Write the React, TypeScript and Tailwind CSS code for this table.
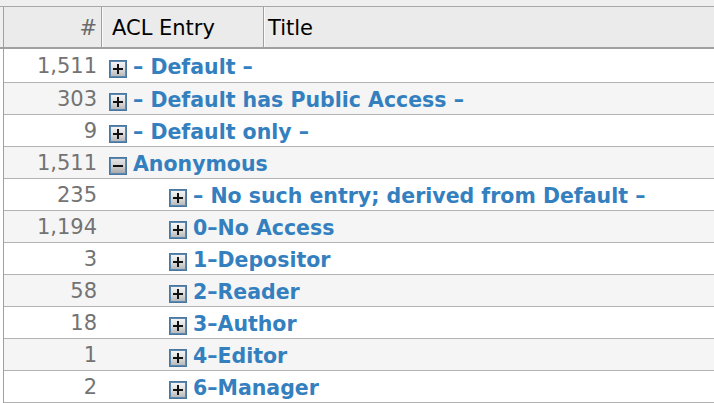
import React from "react";

type Row = { n: string; label: string; level: 0 | 1; open?: boolean };

const rows: Row[] = [
  { n: "1,511", label: "– Default –", level: 0 },
  { n: "303", label: "– Default has Public Access –", level: 0 },
  { n: "9", label: "– Default only –", level: 0 },
  { n: "1,511", label: "Anonymous", level: 0, open: true },
  { n: "235", label: "– No such entry; derived from Default –", level: 1 },
  { n: "1,194", label: "0–No Access", level: 1 },
  { n: "3", label: "1–Depositor", level: 1 },
  { n: "58", label: "2–Reader", level: 1 },
  { n: "18", label: "3–Author", level: 1 },
  { n: "1", label: "4–Editor", level: 1 },
  { n: "2", label: "6–Manager", level: 1 },
];

function Toggle({ open }: { open?: boolean }) {
  return (
    <svg width="18" height="18" viewBox="0 0 18 18" className="shrink-0 mt-[3px]">
      <defs>
        <linearGradient id={open ? "gm" : "gp"} x1="0" y1="0" x2="0" y2="1">
          <stop offset="0" stopColor={open ? "#e4e4e4" : "#f4f4f4"} />
          <stop offset="0.5" stopColor={open ? "#cfcfcf" : "#dedede"} />
          <stop offset="1" stopColor={open ? "#a9a9a9" : "#b9b9b9"} />
        </linearGradient>
      </defs>
      <rect x="0.5" y="0.5" width="17" height="17" fill="#5d88b0" stroke="#4a76a0" />
      <rect x="2" y="2" width="14" height="14" fill={`url(#${open ? "gm" : "gp"})`} />
      <rect x="4" y="8" width="10" height="2" fill="#111" />
      {!open && <rect x="8" y="4" width="2" height="10" fill="#111" />}
    </svg>
  );
}

export default function App() {
  return (
    <div className="w-[714px] h-[403px] overflow-hidden bg-white font-['DejaVu_Sans',sans-serif]">
      <div className="h-[7px] bg-[#efefef] border-b border-[#a8a8a8]" />
      <div className="flex h-[42px] bg-[#efefef] pl-[3px] border-b-2 border-[#a0a0a0]">
        <div className="flex flex-1 border-l border-[#a0a0a0] bg-[#ebebeb]">
          <div className="w-[98px] flex items-center justify-end pr-[4px] pt-[3px] border-r border-[#a0a0a0] text-[21px] text-[#6a6a6a]">
            #
          </div>
          <div className="w-[162px] flex items-center pl-[9px] pt-[3px] border-l border-[#fafafa] border-r border-r-[#a0a0a0] text-[21px] text-black">
            ACL Entry
          </div>
          <div className="flex-1 flex items-center pl-[3px] pt-[3px] border-l border-[#fafafa] text-[21px] text-black">
            Title
          </div>
        </div>
      </div>
      <div className="pl-[3px] bg-white">
        <div className="border-l border-[#a0a0a0]">
          {rows.map((r, i) => (
            <div
              key={i}
              className={`flex items-center pt-[3px] ${i === 0 ? "h-[34px]" : "h-[32px]"} border-b border-[#b2b2b2] ${
                i % 2 === 1 ? "bg-[#f5f5f5]" : "bg-white"
              }`}
            >
              <div className="w-[97px] shrink-0 flex items-center justify-end pr-[4px] text-[21px] text-[#737373]">
                {r.n}
              </div>
              <div
                className={`flex items-center gap-[6px] ${r.level === 0 ? "ml-[8px]" : "ml-[68px]"}`}
              >
                <Toggle open={r.open} />
                <span className="text-[20.5px] font-bold text-[#3480bf] whitespace-nowrap">
                  {r.label}
                </span>
              </div>
            </div>
          ))}
        </div>
      </div>
    </div>
  );
}
